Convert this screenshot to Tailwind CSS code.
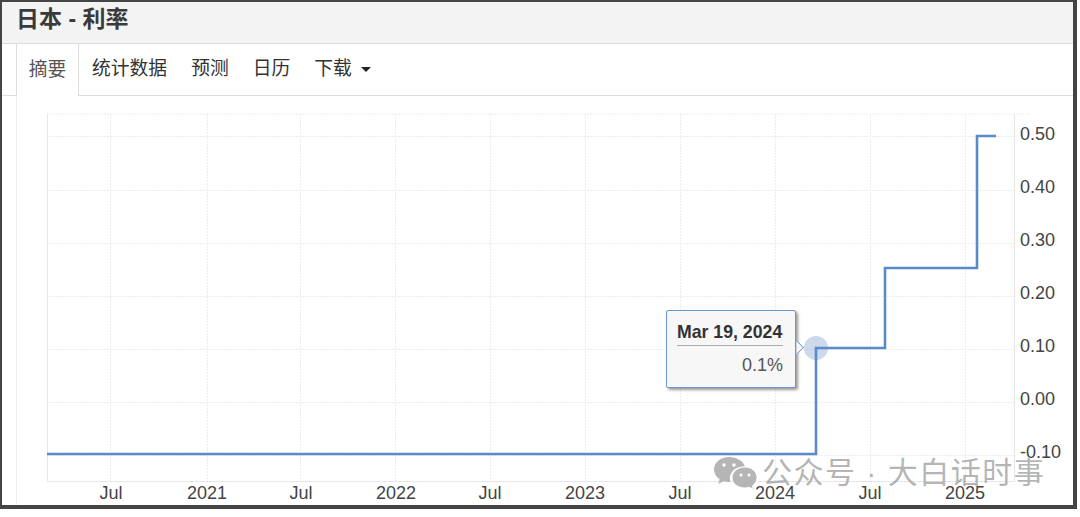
<!DOCTYPE html>
<html lang="zh-CN">
<head>
    <meta charset="UTF-8">
    <title>日本 - 利率</title>
    <script src="https://cdn.jsdelivr.net/npm/@tailwindcss/browser@4"></script>
</head>
<body class="bg-white w-[1080px] h-[517px] overflow-hidden font-['Liberation_Sans','Noto_Sans_CJK_SC',sans-serif]">
    <div class="w-[1077px] h-[509px] border-2 border-r-4 border-b-4 border-[#444] flex flex-col overflow-hidden">
        <!-- Title -->
        <div class="h-[42px] shrink-0 bg-[#f3f3f3] border-b border-[#ddd] pl-[14px] flex items-start">
            <h1 class="text-[23px] leading-[34px] font-bold text-[#3a3a3a]">日本 - 利率</h1>
        </div>

        <!-- Tabs -->
        <div class="h-[52px] shrink-0 border-b border-[#ddd] pl-[14px] flex text-[18.800px] text-[#333]">
            <div class="w-[63px] h-[52px] border-x border-[#ddd] bg-white text-[#555] flex items-center justify-center">摘要</div>
            <div class="flex items-center gap-[24px] pl-[13px]">
                <span>统计数据</span>
                <span>预测</span>
                <span>日历</span>
                <span class="flex items-center gap-[9px]">下载<i class="w-0 h-0 border-x-[5px] border-x-transparent border-t-[5px] border-t-[#222]"></i></span>
            </div>
        </div>

        <!-- Chart -->
        <div class="relative flex-1 border-l border-[#eee] ml-[14px]">
            <svg class="absolute left-[-17px] top-[-96px]" width="1080" height="517" viewBox="0 0 1080 517">
                <g stroke="#ececec" stroke-dasharray="2 1">
                    <path d="M47 114H1030M47 136.500H1014M47 190.500H1014M47 243.500H1014M47 296.500H1014M47 349.500H1014M47 402.500H1014M47 455.500H1014"/>
                    <path d="M110.500 114V481M207.500 114V481M300.500 114V481M395.500 114V481M490.500 114V481M585.500 114V481M680.500 114V481M775.500 114V481M870.500 114V481M965.500 114V481"/>
                </g>
                <path d="M47.500 114V481.500H1014.500V114" fill="none" stroke="#e6e6e6"/>
                <circle cx="816" cy="348" r="12" fill="#5b86c4" fill-opacity="0.3"/>
                <path d="M47 454H816V348H885V268H977V136H996" fill="none" stroke="#5b8ac9" stroke-width="2.600"/>
                <g fill="#444" font-size="18" font-family="Liberation Sans" text-anchor="end">
                    <text x="1055" y="140">0.50</text>
                    <text x="1055" y="193">0.40</text>
                    <text x="1055" y="246">0.30</text>
                    <text x="1055" y="299">0.20</text>
                    <text x="1055" y="352">0.10</text>
                    <text x="1055" y="405">0.00</text>
                    <text x="1061" y="458">-0.10</text>
                </g>
                <g fill="#444" font-size="18" font-family="Liberation Sans" text-anchor="middle">
                    <text x="111" y="499">Jul</text>
                    <text x="207" y="499">2021</text>
                    <text x="301" y="499">Jul</text>
                    <text x="396" y="499">2022</text>
                    <text x="490" y="499">Jul</text>
                    <text x="585" y="499">2023</text>
                    <text x="680" y="499">Jul</text>
                    <text x="775" y="499">2024</text>
                    <text x="870" y="499">Jul</text>
                    <text x="965" y="499">2025</text>
                </g>
                <!-- wechat mark -->
                <g fill="#b5b5b5">
                    <path d="M729 457c-8.500 0-15 5.500-15 12.500 0 4 2.200 7.300 5.600 9.700l-1.400 4.800 5.400-2.800c2 .5 3.700.8 5.400.8h1.500c-.4-1.100-.6-2.300-.6-3.500 0-6.800 5.900-12 13.600-12h1.400C743.800 461.500 737 457 729 457z"/>
                    <path d="M745 467c-7.200 0-13 4.700-13 10.600S737.800 488 745 488c1.500 0 3-.3 4.400-.7l4.200 2.300-1.100-3.800c2.900-2.100 4.500-4.900 4.500-8.200 0-5.900-5.300-10.600-12-10.600z" stroke="#fff"/>
                </g>
                <g fill="#fff">
                    <circle cx="724" cy="465" r="1.800"/><circle cx="734" cy="465" r="1.800"/>
                    <circle cx="741" cy="475" r="1.500"/><circle cx="749" cy="475" r="1.500"/>
                </g>
            </svg>

            <!-- Tooltip -->
            <div class="absolute left-[649px] top-[214px] w-[130px] h-[78px] bg-[#f7f7f7] border border-[#6f97cf] rounded-[2px] shadow-[2px_2px_3px_rgba(0,0,0,0.4)] pl-[10px] pr-[12px] pt-[9px]">
                <div class="text-[17.700px] leading-[24px] font-bold text-[#333] border-b border-[#aaa] whitespace-nowrap pb-[1px]">Mar 19, 2024</div>
                <div class="text-[18px] leading-[24px] text-[#555] text-right pt-[7px]">0.1%</div>
                <i class="absolute right-[-7px] top-[31px] w-[11px] h-[11px] bg-[#f7f7f7] border-t border-r border-[#6f97cf] rotate-45 [clip-path:polygon(0_0,100%_0,100%_100%)]"></i>
            </div>

            <!-- Watermark -->
            <div class="absolute left-[745px] top-[361px] text-[30px] leading-[32px] text-[#a8a8a8]/85 whitespace-nowrap tracking-[1.500px]">公众号 · 大白话时事</div>
        </div>
    </div>
</body>
</html>
